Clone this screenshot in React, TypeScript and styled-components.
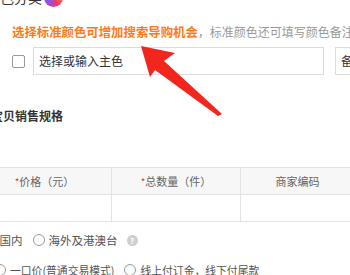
import styled, { createGlobalStyle } from "styled-components";

const Global = createGlobalStyle`
  html, body {
    margin: 0;
    padding: 0;
    background: #fff;
  }
  body {
    font-family: "Noto Sans CJK SC", "Liberation Sans", sans-serif;
  }
`;

const Page = styled.div`
  position: relative;
  width: 350px;
  height: 275px;
  overflow: hidden;
  background: #fff;
  display: flex;
  flex-direction: column;
`;

const TitleRow = styled.div`
  display: flex;
  align-items: center;
  gap: 2px;
  height: 20px;
  margin-top: -13px;
  margin-left: -14px;
  font-size: 14px;
  color: #333;
  white-space: nowrap;
`;

const ColorDot = styled.span`
  flex: none;
  width: 19px;
  height: 19px;
  border-radius: 50%;
  background: conic-gradient(#ffd23a, #ff8a2a, #f2386a, #a24bd6, #5e6be8, #ffd23a);
`;

const Tip = styled.div`
  margin-top: 18px;
  padding-left: 12px;
  height: 14px;
  line-height: 14px;
  font-size: 12px;
  white-space: nowrap;
  color: #999;
`;

const Strong = styled.span`
  color: #ff7a14;
  font-weight: 700;
  font-size: 12.4px;
`;

const InputRow = styled.div`
  display: flex;
  align-items: center;
  margin-top: 8px;
  padding-left: 12px;
  height: 28px;
`;

const Checkbox = styled.span`
  flex: none;
  width: 11px;
  height: 11px;
  border: 1px solid #9a9a9a;
  border-radius: 2px;
  background: #fff;
  margin-right: 8px;
`;

const Input = styled.div<{ $w: number; $gap?: number }>`
  flex: none;
  box-sizing: border-box;
  width: ${(p) => p.$w}px;
  margin-left: ${(p) => p.$gap ?? 0}px;
  height: 28px;
  border: 1px solid #dcdcdc;
  background: #fff;
  padding-left: 5px;
  font-size: 12px;
  line-height: 26px;
  color: #333;
  white-space: nowrap;
  overflow: hidden;
`;

const Divider = styled.div`
  margin-top: 18px;
  height: 2px;
  background: #ececec;
`;

const SectionTitle = styled.div`
  margin-top: 16px;
  margin-left: -9px;
  height: 14px;
  line-height: 14px;
  font-size: 12px;
  font-weight: 700;
  color: #333;
  white-space: nowrap;
`;

const Table = styled.div`
  margin-top: 44px;
  margin-left: -22px;
  display: grid;
  grid-template-columns: 134px 129px 114px;
  border-top: 1px solid #e3e3e3;
`;

const Cell = styled.div<{ $head?: boolean }>`
  height: 26px;
  border-bottom: 1px solid #e3e3e3;
  border-right: 1px solid #e3e3e3;
  background: ${(p) => (p.$head ? "#f7f7f7" : "#fff")};
  display: flex;
  align-items: center;
  justify-content: center;
  font-size: 11px;
  color: #666;
  white-space: nowrap;
`;

const Star = styled.span`
  color: #e5334b;
  font-size: 10px;
  align-self: flex-start;
  margin-top: 6px;
`;

const RadioRow = styled.div<{ $top: number; $left: number; $size: number }>`
  display: flex;
  align-items: center;
  height: 16px;
  margin-top: ${(p) => p.$top}px;
  margin-left: ${(p) => p.$left}px;
  font-size: ${(p) => p.$size}px;
  color: #555;
  white-space: nowrap;
`;

const Radio = styled.span<{ $gap?: number }>`
  flex: none;
  box-sizing: border-box;
  width: 12px;
  height: 12px;
  border: 1px solid #999;
  border-radius: 50%;
  margin-left: ${(p) => p.$gap ?? 0}px;
  margin-right: 4px;
`;

const Help = styled.span`
  flex: none;
  width: 11px;
  height: 11px;
  border-radius: 50%;
  background: #cfcfcf;
  color: #fff;
  font-size: 8px;
  line-height: 11px;
  text-align: center;
  font-weight: 700;
  margin-left: 9px;
`;

const Arrow = styled.svg`
  position: absolute;
  left: 0;
  top: 0;
  pointer-events: none;
`;

export default function App() {
  return (
    <>
      <Global />
      <Page>
        <TitleRow>
          颜色分类
          <ColorDot />
        </TitleRow>
        <Tip>
          <Strong>选择标准颜色可增加搜索导购机会</Strong>，标准颜色还可填写颜色备注信息
        </Tip>
        <InputRow>
          <Checkbox />
          <Input $w={291}>选择或输入主色</Input>
          <Input $w={60} $gap={11}>
            备注
          </Input>
        </InputRow>
        <Divider />
        <SectionTitle>宝贝销售规格</SectionTitle>
        <Table>
          <Cell $head>
            <Star>*</Star>价格（元）
          </Cell>
          <Cell $head>
            <Star>*</Star>总数量（件）
          </Cell>
          <Cell $head>商家编码</Cell>
          <Cell />
          <Cell />
          <Cell />
        </Table>
        <RadioRow $top={10} $left={-28} $size={11.5}>
          <Radio />
          中国内
          <Radio $gap={10} />
          海外及港澳台
          <Help>?</Help>
        </RadioRow>
        <RadioRow $top={14} $left={-6} $size={10.8}>
          <Radio />
          一口价(普通交易模式)
          <Radio $gap={10} />
          线上付订金，线下付尾款
        </RadioRow>
        <Arrow width="350" height="275" viewBox="0 0 350 275">
          <polygon
            points="141,46 175,53 164,61 222,114 218,116 155,70 150,77"
            fill="#f3261d"
          />
        </Arrow>
      </Page>
    </>
  );
}
